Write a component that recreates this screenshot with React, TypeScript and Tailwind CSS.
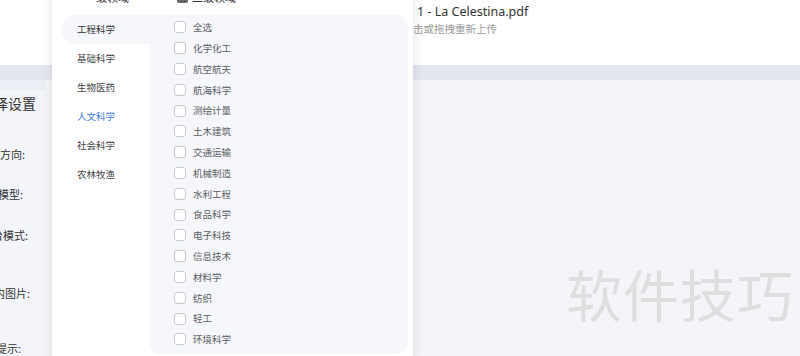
import React from 'react';

const primary = ['工程科学', '基础科学', '生物医药', '人文科学', '社会科学', '农林牧渔'];
const secondary = [
  '全选', '化学化工', '航空航天', '航海科学', '测绘计量', '土木建筑', '交通运输', '机械制造',
  '水利工程', '食品科学', '电子科技', '信息技术', '材料学', '纺织', '轻工', '环境科学',
];

const cjk = { fontFamily: '"Noto Sans CJK SC", "Noto Sans", sans-serif' };

function Box() {
  return <span className="w-[12px] h-[12px] rounded-[3px] border border-[#c6c9d0] bg-white shrink-0" />;
}

export default function App() {
  return (
    <div className="relative w-[800px] h-[356px] overflow-hidden bg-white" style={cjk}>
      {/* page underneath */}
      <div className="flex flex-col h-full">
        <div className="h-[67px] bg-white pl-[417px] pt-[3px]">
          <div className="text-[12.5px] text-[#333] leading-[18px]" style={{ fontFamily: '"Noto Sans", sans-serif' }}>
            1 - La Celestina.pdf
          </div>
          <div className="text-[10.5px] text-[#9a9a9a] leading-[16px] -ml-[4px]">击或拖拽重新上传</div>
        </div>
        <div className="h-[15px] bg-[#e4e7f0]" />
        <div className="flex-1 bg-[#f4f5f9] flex">
          <div className="w-[45px] flex flex-col text-[#333]">
            <div className="h-[10px] bg-[#eceef5]" />
            <div className="text-[14px] leading-[26px] -ml-[6px] whitespace-nowrap">择设置</div>
            <div className="text-[11px] leading-[16px] mt-[30px] whitespace-nowrap">方向:</div>
            <div className="text-[11px] leading-[16px] mt-[24px] -ml-[2px] whitespace-nowrap">模型:</div>
            <div className="text-[11px] leading-[16px] mt-[25px] -ml-[8px] whitespace-nowrap">台模式:</div>
            <div className="text-[11px] leading-[16px] mt-[42px] -ml-[6px] whitespace-nowrap">内图片:</div>
            <div className="text-[11px] leading-[16px] mt-[39px] -ml-[4px] whitespace-nowrap">提示:</div>
          </div>
          <div className="flex-1 flex items-center justify-end pr-[6px] pt-[150px]">
            <span className="text-[56px] leading-none text-[#dedede] tracking-[1px]">软件技巧</span>
          </div>
        </div>
      </div>

      {/* cascader dropdown */}
      <div className="absolute left-[52px] top-[-14px] w-[361px] h-[380px] bg-white rounded-lg shadow-[0_2px_12px_rgba(0,0,0,0.12)] flex flex-col">
        <div className="h-[29px] flex items-start text-[11px] text-[#333]">
          <span className="ml-[33px] mt-[3px]">一级领域</span>
          <span className="ml-[48px] mt-[3px] flex items-center gap-[4px]">
            <span className="w-[11px] h-[11px] rounded-[2px] bg-[#666]" />
            二级领域
          </span>
        </div>
        <div className="flex">
          <div className="w-[98px] pl-[10px] flex flex-col">
            {primary.map((p, i) => (
              <div
                key={p}
                className={`h-[29px] flex items-center pl-[15px] text-[9.5px] ${
                  i === 0 ? 'bg-[#f6f7fa] rounded-l-xl text-[#333]' : i === 3 ? 'text-[#3d7be0]' : 'text-[#444]'
                }`}
              >
                {p}
              </div>
            ))}
          </div>
          <div className="w-[258px] h-[339px] bg-[#f6f7fa] rounded-r-xl rounded-bl-lg pt-[2px] pl-[24px]">
            {secondary.map((s) => (
              <div key={s} className="h-[20.8px] flex items-center gap-[7px] text-[9.5px] text-[#5a5d63]">
                <Box />
                <span>{s}</span>
              </div>
            ))}
          </div>
        </div>
      </div>
    </div>
  );
}
